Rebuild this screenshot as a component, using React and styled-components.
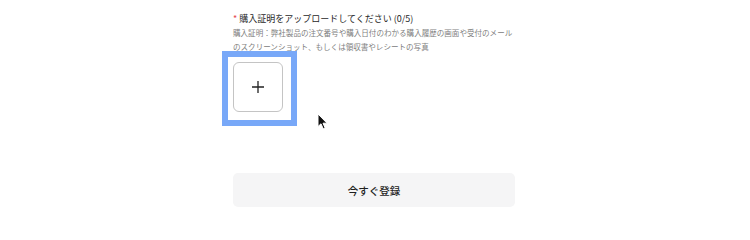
import React from 'react';
import styled, { createGlobalStyle } from 'styled-components';

const GlobalStyle = createGlobalStyle`
  html, body {
    margin: 0;
    padding: 0;
    background: #ffffff;
  }
  body {
    font-family: 'Noto Sans CJK JP', 'Noto Sans', sans-serif;
  }
`;

function Cursor() {
  return (
    <svg width="12" height="17" viewBox="0 0 12 17">
      <path
        d="M1 1 L1 13.5 L4 10.8 L6.2 15.8 L8.2 15 L6 10.2 L10 10.2 Z"
        fill="#111"
        stroke="#fff"
        strokeWidth="1"
        strokeLinejoin="round"
      />
    </svg>
  );
}

function App() {
  return (
    <>
      <GlobalStyle />
      <Page>
        <Form>
          <Label>
            <Star>*</Star>購入証明をアップロードしてください (0/5)
          </Label>
          <Hint>
            購入証明：弊社製品の注文番号や購入日付のわかる購入履歴の画面や受付のメール
            <br />
            のスクリーンショット、もしくは領収書やレシートの写真
          </Hint>
          <UploadRow>
            <UploadBox type="button" aria-label="upload">
              <svg width="14" height="14" viewBox="0 0 14 14">
                <path d="M7 1 V13 M1 7 H13" stroke="#222" strokeWidth="1.3" />
              </svg>
            </UploadBox>
            <CursorSpot>
              <Cursor />
            </CursorSpot>
          </UploadRow>
          <SubmitButton type="button">今すぐ登録</SubmitButton>
        </Form>
      </Page>
    </>
  );
}

const Page = styled.div`
  width: 750px;
  height: 240px;
  display: flex;
  justify-content: flex-start;
  padding-left: 233px;
  padding-top: 12px;
  box-sizing: border-box;
`;

const Form = styled.div`
  width: 282px;
  display: flex;
  flex-direction: column;
`;

const Label = styled.div`
  font-size: 9px;
  line-height: 14px;
  color: #1f1f1f;
  font-weight: 400;
  white-space: nowrap;
`;

const Star = styled.span`
  color: #e5484d;
  margin-right: 2px;
`;

const Hint = styled.div`
  font-size: 7.55px;
  line-height: 14px;
  color: #808080;
  width: 300px;
  white-space: nowrap;
`;

const UploadRow = styled.div`
  position: relative;
  margin-top: 8px;
  height: 50px;
`;

const UploadBox = styled.button`
  position: relative;
  width: 50px;
  height: 50px;
  box-sizing: border-box;
  border: 1px solid #c4c4c4;
  border-radius: 6px;
  background: #fff;
  display: flex;
  align-items: center;
  justify-content: center;
  padding: 0;

  &::before {
    content: '';
    position: absolute;
    top: -12px;
    left: -12px;
    right: -15px;
    bottom: -15px;
    border: 6px solid #78a8f8;
    pointer-events: none;
  }
`;

const CursorSpot = styled.div`
  position: absolute;
  left: 84px;
  top: 49px;
`;

const SubmitButton = styled.button`
  margin-top: 61px;
  width: 282px;
  height: 34px;
  border: none;
  border-radius: 5px;
  background: #f5f5f6;
  color: #1f1f1f;
  font-family: 'Noto Sans CJK JP', 'Noto Sans', sans-serif;
  font-size: 10.5px;
  font-weight: 500;
`;

export default App;
